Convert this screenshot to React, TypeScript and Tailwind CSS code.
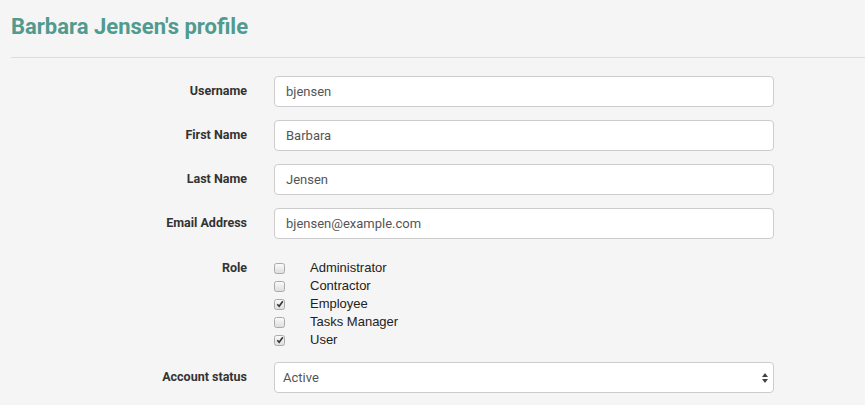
const roles = [
  { name: 'Administrator', checked: false },
  { name: 'Contractor', checked: false },
  { name: 'Employee', checked: true },
  { name: 'Tasks Manager', checked: false },
  { name: 'User', checked: true },
]

function Field({ label, value }: { label: string; value: string }) {
  return (
    <div className="flex items-center">
      <label className="w-[248px] shrink-0 pr-px text-right text-[12.5px] font-bold text-[#333]">{label}</label>
      <div className="ml-[26px] flex h-[31px] w-[500px] items-center rounded-[4px] border border-[#ccc] bg-white px-[11px] text-[13px] text-[#555]">
        {value}
      </div>
    </div>
  )
}

function Checkbox({ checked }: { checked: boolean }) {
  return (
    <span className="flex size-[11px] items-center justify-center rounded-[2.5px] border border-[#aaa] bg-gradient-to-b from-[#fafafa] to-[#dedede]">
      {checked && (
        <svg width="8" height="8" viewBox="0 0 8 8">
          <path d="M1.3 4.2 L3.2 6.3 L6.8 1.2" fill="none" stroke="#333" strokeWidth="1.6" />
        </svg>
      )}
    </span>
  )
}

export default function App() {
  return (
    <div className="min-h-[405px] bg-[#f5f5f5] pl-[11px] font-['Roboto',sans-serif]">
      <h1 className="pt-[14px] text-[22px] leading-[26px] font-bold text-[#519a8e]">Barbara Jensen's profile</h1>
      <hr className="mt-[17px] border-0 border-t border-[#dddddd]" />

      <div className="mt-[18px] flex flex-col gap-[13px] -ml-[11px]">
        <Field label="Username" value="bjensen" />
        <Field label="First Name" value="Barbara" />
        <Field label="Last Name" value="Jensen" />
        <Field label="Email Address" value="bjensen@example.com" />

        {/* Role */}
        <div className="mt-[7px] flex items-start">
          <label className="w-[248px] shrink-0 pr-px text-right text-[12.5px] leading-[18px] font-bold text-[#333]">Role</label>
          <div className="ml-[26px] flex flex-col">
            {roles.map((r) => (
              <div key={r.name} className="flex h-[18px] items-center">
                <Checkbox checked={r.checked} />
                <span className="ml-[25px] font-['Liberation_Sans',sans-serif] text-[13px] text-[#222]">{r.name}</span>
              </div>
            ))}
          </div>
        </div>

        {/* Account status */}
        <div className="flex items-center">
          <label className="w-[248px] shrink-0 pr-px text-right text-[12.5px] font-bold text-[#333]">Account status</label>
          <div className="ml-[26px] flex h-[31px] w-[500px] items-center justify-between rounded-[4px] border border-[#ccc] bg-white pr-[4px] pl-[8px] text-[13px] text-[#555]">
            <span>Active</span>
            <svg width="8" height="12" viewBox="0 0 8 12">
              <path d="M4 1 L7 5 L1 5 Z" fill="#444" />
              <path d="M4 11 L7 7 L1 7 Z" fill="#444" />
            </svg>
          </div>
        </div>
      </div>
    </div>
  )
}
